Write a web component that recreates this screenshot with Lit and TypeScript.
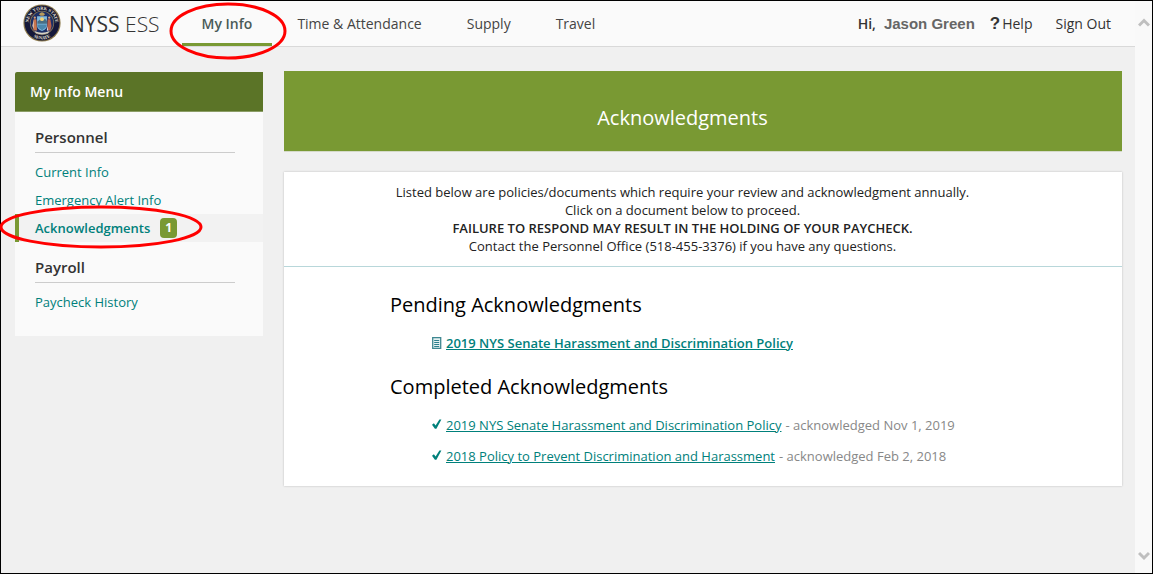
import { LitElement, html, css, svg } from "lit";
import { customElement, property } from "lit/decorators.js";

interface MenuItem {
  label: string;
  active?: boolean;
  badge?: number;
}

interface MenuGroup {
  title: string;
  items: MenuItem[];
}

interface CompletedDocument {
  title: string;
  date: string;
}

const NAV = ["My Info", "Time & Attendance", "Supply", "Travel"];

const MENU: MenuGroup[] = [
  {
    title: "Personnel",
    items: [
      { label: "Current Info" },
      { label: "Emergency Alert Info" },
      { label: "Acknowledgments", active: true, badge: 1 },
    ],
  },
  { title: "Payroll", items: [{ label: "Paycheck History" }] },
];

const PENDING = ["2019 NYS Senate Harassment and Discrimination Policy"];

const COMPLETED: CompletedDocument[] = [
  { title: "2019 NYS Senate Harassment and Discrimination Policy", date: "Nov 1, 2019" },
  { title: "2018 Policy to Prevent Discrimination and Harassment", date: "Feb 2, 2018" },
];

const documentIcon = svg`<path fill="#e4f1f2" stroke="#3f8791" stroke-width="1.3" d="M.7.6h8v10.8h-8z"/>
  <path stroke="#2b7f8c" d="M2.2 3.5h5M2.2 5.5h5M2.2 7.5h5M2.2 9.5h5" stroke-width="1"/>`;
const checkIcon = svg`<path fill="#00807b" d="M0 5.8 1.9 4.3 3.6 6.4 7.4.6 9.4.4 4.4 9.8 2.9 9.8z"/>`;

@customElement("senate-seal")
class SenateSeal extends LitElement {
  static styles = css`
    :host { display: block; line-height: 0; padding-bottom: 2px; }
    svg { overflow: visible; }
    .lettering { font: bold 12px "Liberation Serif", serif; fill: #efe9d8; }
  `;

  render() {
    return html`<svg width="38" height="38" viewBox="0 0 100 100" role="img" aria-label="New York State Senate seal">
      <defs>
        <path id="upper" d="M15 50A35 35 0 0 1 85 50" />
        <path id="lower" d="M7 50A43 43 0 0 0 93 50" />
      </defs>
      <circle cx="50" cy="50" r="49" fill="#8d7a4c" />
      <circle cx="50" cy="50" r="46" fill="#15183a" />
      <circle cx="50" cy="50" r="32" fill="#8b7b55" />
      <circle cx="50" cy="50" r="30" fill="#1c2f66" />
      <path d="M37 32h26v25q0 9-13 14-13-5-13-14z" fill="#7fb9de" />
      <path d="M38 46l8-6 5 4 7-5 5 6v7H38z" fill="#476f86" />
      <circle cx="50" cy="40" r="5" fill="#f1d27a" />
      <path d="M38 54h24v4q-2 7-12 11-10-4-12-11z" fill="#4a87ad" />
      <path d="M42 27q8-10 16 0l-4 4h-8z" fill="#b89b5b" />
      <circle cx="31" cy="36" r="3" fill="#d9a07a" />
      <circle cx="69" cy="36" r="3" fill="#d9a07a" />
      <path d="M28 40h7l2 30h-9l-3-12z" fill="#c9764d" />
      <path d="M65 40h7l3 18-3 12h-9z" fill="#b9604a" />
      <path d="M28 41l-3 16 3 8zM63 58l4 12h-4z" fill="#d9dde0" />
      <path d="M30 71q20 9 40 0l-4 6q-16 6-32 0z" fill="#d8d3c5" />
      <text class="lettering"><textPath href="#upper" startOffset="50%" text-anchor="middle">NEW YORK STATE</textPath></text>
      <text class="lettering"><textPath href="#lower" startOffset="50%" text-anchor="middle">SENATE</textPath></text>
    </svg>`;
  }
}

@customElement("site-header")
class SiteHeader extends LitElement {
  static styles = css`
    :host { display: block; }
    .bar {
      display: flex;
      height: 45px;
      background: #fafafa;
      border-bottom: 1px solid #d9d9d9;
      padding: 0 24px 0 22px;
    }
    .brand {
      display: flex;
      align-items: center;
      gap: 8px;
      margin-right: 22px;
      font-size: 21px;
      color: #333;
      white-space: nowrap;
    }
    .suite { font-weight: 300; }
    nav { display: flex; gap: 5px; white-space: nowrap; }
    .tab {
      position: relative;
      padding: 0 20px;
      line-height: 45px;
      color: #444;
      text-decoration: none;
    }
    .current {
      box-sizing: border-box;
      border-bottom: 3px solid #799933;
      font-weight: 600;
      color: #4a5a58;
    }
    .ring { position: absolute; left: -13px; top: 1px; overflow: visible; pointer-events: none; z-index: 2; }
    .account {
      display: flex;
      align-items: center;
      margin-left: auto;
      white-space: nowrap;
      color: #333;
    }
    .greeting { font-weight: 600; margin-right: 8px; }
    .name { font: bold 15px "Liberation Sans", Arial, sans-serif; color: #666; margin-right: 15px; }
    .account a { color: #333; text-decoration: none; }
    .help { display: flex; align-items: center; gap: 2px; margin-right: 23px; }
    .mark { font: bold 17px/20px "Liberation Sans", Arial, sans-serif; }
  `;

  render() {
    return html`<header class="bar">
      <div class="brand">
        <senate-seal></senate-seal>
        <span>NYSS <span class="suite">ESS</span></span>
      </div>
      <nav aria-label="Main">
        ${NAV.map(
          (label, i) => html`<a class="tab ${i === 0 ? "current" : ""}" href="#">${label}${i === 0
            ? html`<svg class="ring" width="118" height="58" aria-hidden="true">
                <ellipse cx="59" cy="29" rx="57" ry="27" fill="none" stroke="#f00" stroke-width="3" />
              </svg>`
            : ""}</a>`
        )}
      </nav>
      <div class="account">
        <span class="greeting">Hi,</span>
        <span class="name">Jason Green</span>
        <a class="help" href="#"><span class="mark">?</span><span>Help</span></a>
        <a href="#">Sign Out</a>
      </div>
    </header>`;
  }
}

@customElement("side-menu")
class SideMenu extends LitElement {
  @property() heading = "";
  @property({ attribute: false }) groups: MenuGroup[] = [];

  static styles = css`
    :host { display: block; }
    .menu { background: #fafafa; padding-bottom: 20px; }
    .title {
      margin: 0;
      padding: 0 15px;
      background: #5b7427;
      border-bottom: 1px solid #8b9d66;
      border-radius: 2px 0 0 0;
      color: #fff;
      font-size: 14px;
      font-weight: 600;
      line-height: 39px;
    }
    h3 {
      margin: 0 28px 5px 20px;
      padding: 11px 0 1px;
      border-bottom: 1px solid #ccc;
      color: #333;
      font-size: 15px;
      font-weight: 600;
      line-height: 28px;
    }
    ul { list-style: none; margin: 0; padding: 0; }
    li {
      position: relative;
      display: flex;
      align-items: center;
      height: 28px;
      padding-left: 16px;
      border-left: 4px solid transparent;
    }
    a { color: #00807b; font-size: 13px; text-decoration: none; }
    .active { background: #f2f2f2; border-left-color: #799933; }
    .active a { font-weight: 600; }
    .badge {
      margin-left: 10px;
      padding: 0 5px;
      border-radius: 4px;
      background: #799933;
      color: #fff;
      font-size: 12px;
      font-weight: 700;
      line-height: 20px;
    }
    .ring { position: absolute; left: -20px; top: -8px; overflow: visible; pointer-events: none; z-index: 2; }
  `;

  render() {
    return html`<aside class="menu">
      <h2 class="title">${this.heading}</h2>
      ${this.groups.map(
        (group) => html`<h3>${group.title}</h3>
          <ul>
            ${group.items.map(
              (item) => html`<li class=${item.active ? "active" : ""}>
                <a href="#">${item.label}</a>
                ${item.badge ? html`<span class="badge">${item.badge}</span>` : ""}
                ${item.active
                  ? html`<svg class="ring" width="204" height="44" aria-hidden="true">
                      <ellipse cx="102" cy="21" rx="100" ry="20" fill="none" stroke="#f00" stroke-width="3" />
                    </svg>`
                  : ""}
              </li>`
            )}
          </ul>`
      )}
    </aside>`;
  }
}

@customElement("acknowledgment-panel")
class AcknowledgmentPanel extends LitElement {
  static styles = css`
    :host { display: block; }
    .banner {
      margin: 0 0 20px;
      padding: 14px 41px 0 0;
      background: #799933;
      border-bottom: 1px solid #d5dac9;
      color: #fff;
      font-size: 20px;
      font-weight: 400;
      line-height: 66px;
      text-align: center;
    }
    .card { background: #fff; box-shadow: 0 0 2px #bbb; padding-bottom: 8px; }
    .notice {
      margin: 0;
      padding: 11px 41px 11px 0;
      border-bottom: 1px solid #b8d7da;
      color: #222;
      font-size: 13px;
      line-height: 18px;
      text-align: center;
    }
    .notice strong { font-weight: 600; }
    .lists { padding: 16px 106px 0; }
    h2 { margin: 0; color: #000; font-size: 20px; font-weight: 400; line-height: 44px; }
    ul { list-style: none; margin: 0 0 7px; padding: 0 0 0 42px; }
    li { display: flex; align-items: center; height: 31px; font-size: 13px; color: #888; white-space: nowrap; }
    a { color: #00807b; margin-right: 4px; }
    .pending a { font-weight: 600; }
    .icon { width: 10px; height: 12px; margin-right: 4px; flex: none; }
  `;

  render() {
    return html`<section>
      <h1 class="banner">Acknowledgments</h1>
      <div class="card">
        <p class="notice">
          Listed below are policies/documents which require your review and acknowledgment annually.<br />
          Click on a document below to proceed.<br />
          <strong>FAILURE TO RESPOND MAY RESULT IN THE HOLDING OF YOUR PAYCHECK.</strong><br />
          Contact the Personnel Office (518-455-3376) if you have any questions.
        </p>
        <div class="lists">
          <h2>Pending Acknowledgments</h2>
          <ul class="pending">
            ${PENDING.map(
              (title) => html`<li>
                <svg class="icon" viewBox="0 0 10 12" aria-hidden="true">${documentIcon}</svg>
                <a href="#">${title}</a>
              </li>`
            )}
          </ul>
          <h2>Completed Acknowledgments</h2>
          <ul>
            ${COMPLETED.map(
              (doc) => html`<li>
                <svg class="icon" viewBox="0 0 10 12" aria-hidden="true">${checkIcon}</svg>
                <a href="#">${doc.title}</a>
                <span>- acknowledged ${doc.date}</span>
              </li>`
            )}
          </ul>
        </div>
      </div>
    </section>`;
  }
}

@customElement("app-root")
class AppRoot extends LitElement {
  static styles = css`
    :host {
      display: flex;
      box-sizing: border-box;
      min-height: 100vh;
      border: 1px solid #000;
      background: #f0f0f0;
      font-family: "Open Sans", sans-serif;
      font-size: 14px;
    }
    .page { flex: 1; min-width: 0; }
    .columns {
      display: grid;
      grid-template-columns: 248px minmax(0, 1fr);
      gap: 21px;
      align-items: start;
      padding: 24px 13px 24px 14px;
    }
    .sidebar { margin-top: 1px; }
    .scroll {
      display: flex;
      flex-direction: column;
      justify-content: space-between;
      align-items: center;
      width: 17px;
      box-sizing: border-box;
      padding: 16px 0 12px;
      background: #f9f9f9;
    }
    .scroll svg { display: block; }
  `;

  render() {
    return html`
      <div class="page">
        <site-header></site-header>
        <main class="columns">
          <side-menu class="sidebar" heading="My Info Menu" .groups=${MENU}></side-menu>
          <acknowledgment-panel></acknowledgment-panel>
        </main>
      </div>
      <div class="scroll" aria-hidden="true">
        <svg width="12" height="10"><path d="M1 8.5l5-5 5 5" fill="none" stroke="#bfbfbf" stroke-width="3" /></svg>
        <svg width="12" height="10"><path d="M1 2l5 5 5-5" fill="none" stroke="#bfbfbf" stroke-width="3" /></svg>
      </div>
    `;
  }
}
